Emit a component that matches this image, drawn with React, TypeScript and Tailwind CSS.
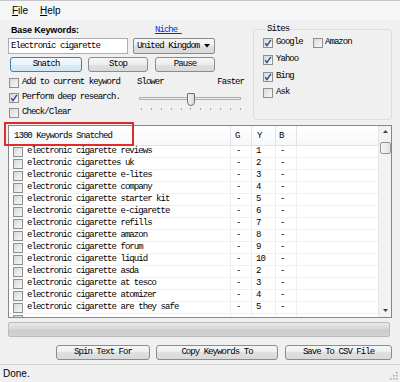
import clsx from "clsx";

const mono = "font-['Liberation_Mono',monospace] text-[9px] leading-none tracking-[-0.95px]";
const sans = "font-['Liberation_Sans',Arial,sans-serif] text-[10px] leading-none";

function Box({ checked }: { checked?: boolean }) {
  return (
    <span className="w-[10px] h-[10px] shrink-0 border border-[#8e8f8f] bg-[linear-gradient(135deg,#d8d8d8,#f8f8f8)] flex items-center justify-center">
      {checked && (
        <svg width="8" height="8" viewBox="0 0 8 8">
          <path d="M1.2 4.3 L3 6.6 L6.9 0.9" stroke="#2e4690" strokeWidth="1.4" fill="none" />
        </svg>
      )}
    </span>
  );
}

function Btn({ label, className, focus }: { label: string; className: string; focus?: boolean }) {
  return (
    <div
      className={clsx(
        "h-[15px] shrink-0 flex items-center justify-center rounded-[3px] border",
        mono,
        focus
          ? "border-[#3c7fb1] bg-[linear-gradient(#f4f9fd,#e9f3fa_50%,#d9eaf6_50%,#d2e6f4)]"
          : "border-[#8c8c8c] bg-[linear-gradient(#f6f6f6,#eeeeee_50%,#e0e0e0_50%,#d9d9d9)]",
        className
      )}
    >
      {label}
    </div>
  );
}

const rows: [string, string][] = [
  ["electronic cigarette reviews", "1"],
  ["electronic cigarettes uk", "2"],
  ["electronic cigarette e-lites", "3"],
  ["electronic cigarette company", "4"],
  ["electronic cigarette starter kit", "5"],
  ["electronic cigarette e-cigarette", "6"],
  ["electronic cigarette refills", "7"],
  ["electronic cigarette amazon", "8"],
  ["electronic cigarette forum", "9"],
  ["electronic cigarette liquid", "10"],
  ["electronic cigarette asda", "2"],
  ["electronic cigarette at tesco", "3"],
  ["electronic cigarette atomizer", "4"],
  ["electronic cigarette are they safe", "5"],
  ["", ""],
];

export default function App() {
  return (
    <div className="w-[400px] h-[382px] bg-[#f0f0f0] text-black flex flex-col overflow-hidden relative">
      {/* menu */}
      <div className={clsx("h-[20px] shrink-0 flex items-center pl-[12px] border-t border-[#c4c4c4] bg-[#f5f6f7]", sans)}>
        <span className="w-[28px]">
          <span className="underline">F</span>ile
        </span>
        <span>
          <span className="underline">H</span>elp
        </span>
      </div>

      {/* top controls */}
      <div className="h-[105px] shrink-0 flex px-[8px]">
        <div className="w-[237px] flex flex-col pt-[2px]">
          <div className="h-[16px] flex items-center">
            <span className="w-[147px] pl-[3px] font-['Liberation_Sans',Arial,sans-serif] text-[9px] font-bold tracking-[-0.15px] leading-none">
              Base Keywords:
            </span>
            <span className={clsx(mono, "text-[#1a1aee] underline")}>Niche&nbsp;</span>
          </div>
          <div className="h-[16px] flex gap-[5px]">
            <div className={clsx("w-[120px] h-[16px] border border-[#abadb3] bg-white flex items-center pl-[2px]", mono)}>
              Electronic cigarette
            </div>
            <div
              className={clsx(
                "w-[82px] h-[16px] rounded-[2px] border border-[#8c8c8c] bg-[linear-gradient(#f6f6f6,#eeeeee_50%,#e0e0e0_50%,#d9d9d9)] flex items-center pl-[3px] pr-[4px] justify-between",
                mono
              )}
            >
              <span>United Kingdom</span>
              <svg width="6" height="4" viewBox="0 0 6 4">
                <path d="M0 0 H6 L3 3.5 Z" fill="#000" />
              </svg>
            </div>
          </div>
          <div className="mt-[3px] flex">
            <Btn label="Snatch" focus className="ml-[2px] w-[72px]" />
            <Btn label="Stop" className="ml-[6px] w-[60px]" />
            <Btn label="Pause" className="ml-[7px] w-[60px]" />
          </div>
          <div className="mt-[3px] flex">
            <div className="w-[129px] flex flex-col">
              {[
                ["Add to current keyword", false],
                ["Perform deep research.", true],
                ["Check/Clear", false],
              ].map(([t, c]) => (
                <div key={t as string} className="h-[15px] flex items-center gap-[3px] pl-[1px]">
                  <Box checked={c as boolean} />
                  <span className={mono}>{t as string}</span>
                </div>
              ))}
            </div>
            <div className="w-[108px] flex flex-col">
              <div className={clsx("h-[15px] flex items-center justify-between pr-[1px]", mono)}>
                <span>Slower</span>
                <span>Faster</span>
              </div>
              <div className="relative h-[20px]">
                <div className="absolute left-[2px] top-[7px] w-[102px] h-[3px] border border-[#b0b0b0] bg-[#e7eaea]" />
                <div className="absolute left-[50px] top-[3px] w-[8px] h-[13px] rounded-b-[4px] rounded-t-[1px] border border-[#707070] bg-[linear-gradient(90deg,#f2f2f2,#dcdcdc)]" />
                <div className="absolute left-[4px] top-[18px] w-[100px] flex justify-between">
                  {Array.from({ length: 11 }).map((_, i) => (
                    <span key={i} className="w-[1px] h-[2px] bg-[#a8a8a8]" />
                  ))}
                </div>
              </div>
            </div>
          </div>
        </div>

        <fieldset className="ml-[8px] mt-[5px] w-[139px] h-[95px] border border-[#d5dfe5] rounded-[3px] pl-[9px]">
          <legend className={clsx("ml-[3px] px-[1px]", mono)}>Sites</legend>
          <div className="h-[17px] flex items-center">
            <div className="w-[50px] flex items-center gap-[3px]">
              <Box checked />
              <span className={mono}>Google</span>
            </div>
            <div className="flex items-center gap-[2px]">
              <Box />
              <span className={mono}>Amazon</span>
            </div>
          </div>
          <div className="h-[17px] flex items-center gap-[3px]">
            <Box checked />
            <span className={mono}>Yahoo</span>
          </div>
          <div className="h-[17px] flex items-center gap-[3px]">
            <Box checked />
            <span className={mono}>Bing</span>
          </div>
          <div className="h-[15px] flex items-center gap-[3px]">
            <Box />
            <span className={mono}>Ask</span>
          </div>
        </fieldset>
      </div>

      {/* keyword list */}
      <div className="mx-[8px] w-[384px] h-[193px] shrink-0 border border-[#828790] bg-white flex overflow-hidden">
        <div className="flex-1 flex flex-col overflow-hidden">
          <div className={clsx("h-[20px] shrink-0 flex border-b border-[#e3e3e3] bg-[linear-gradient(#ffffff,#f7f8fa)]", mono)}>
            <div className="w-[222px] border-r border-[#e3e3e3] flex items-center pl-[5px] pt-[2px]">1300 Keywords Snatched</div>
            <div className="w-[21px] border-r border-[#e3e3e3] flex items-center pl-[4px] pt-[2px]">G</div>
            <div className="w-[24px] border-r border-[#e3e3e3] flex items-center pl-[5px] pt-[2px]">Y</div>
            <div className="w-[21px] border-r border-[#e3e3e3] flex items-center pl-[3px] pt-[2px]">B</div>
          </div>
          {rows.map(([t, n], i) => (
            <div key={i} className={clsx("h-[12px] shrink-0 flex border-b border-[#f0f0f0]", mono)}>
              <div className="w-[222px] border-r border-[#eeeeee] flex items-center pl-[4px] gap-[4px]">
                <Box />
                <span>{t}</span>
              </div>
              <div className="w-[21px] border-r border-[#eeeeee] flex items-center pl-[5px]">{n && "-"}</div>
              <div className="w-[24px] border-r border-[#eeeeee] flex items-center pl-[4px]">{n}</div>
              <div className="w-[21px] border-r border-[#eeeeee] flex items-center pl-[4px]">{n && "-"}</div>
            </div>
          ))}
        </div>
        <div className="w-[13px] shrink-0 bg-[#f2f2f2] border-l border-[#e6e6e6] flex flex-col items-center">
          <svg className="mt-[4px]" width="5" height="3" viewBox="0 0 5 3">
            <path d="M0 3 L2.5 0 L5 3 Z" fill="#404040" />
          </svg>
          <div className="mt-[9px] w-[11px] h-[12px] rounded-[2px] border border-[#979797] bg-[linear-gradient(90deg,#f4f4f4,#e2e2e2)]" />
          <svg className="mt-auto mb-[5px]" width="5" height="3" viewBox="0 0 5 3">
            <path d="M0 0 L5 0 L2.5 3 Z" fill="#404040" />
          </svg>
        </div>
      </div>

      {/* progress */}
      <div className="mt-[4px] mx-[8px] w-[382px] h-[15px] shrink-0 rounded-[2px] border border-[#bcbcbc] bg-[linear-gradient(#e9e9e9,#d8d8d8_45%,#cbcbcb_55%,#d3d3d3)]" />

      {/* bottom buttons */}
      <div className="mt-[8px] flex pl-[56px]">
        <Btn label="Spin Text For" className="w-[94px]" />
        <Btn label="Copy Keywords To" className="ml-[6px] w-[122px]" />
        <Btn label="Save To CSV File" className="ml-[7px] w-[107px]" />
      </div>

      {/* status bar */}
      <div className={clsx("mt-auto h-[18px] shrink-0 border-t border-[#d0d0d0] flex items-center pl-[3px] relative", sans)}>
        Done.
        <svg className="absolute right-[2px] bottom-[2px]" width="9" height="9" viewBox="0 0 9 9">
          {[
            [7, 1],
            [7, 4],
            [4, 4],
            [7, 7],
            [4, 7],
            [1, 7],
          ].map(([x, y], i) => (
            <rect key={i} x={x} y={y} width="1.5" height="1.5" fill="#a0a0a0" />
          ))}
        </svg>
      </div>

      {/* annotation */}
      <div className="absolute left-[4px] top-[122px] w-[130px] h-[24px] border-2 border-[#e02b2b]" />
    </div>
  );
}
